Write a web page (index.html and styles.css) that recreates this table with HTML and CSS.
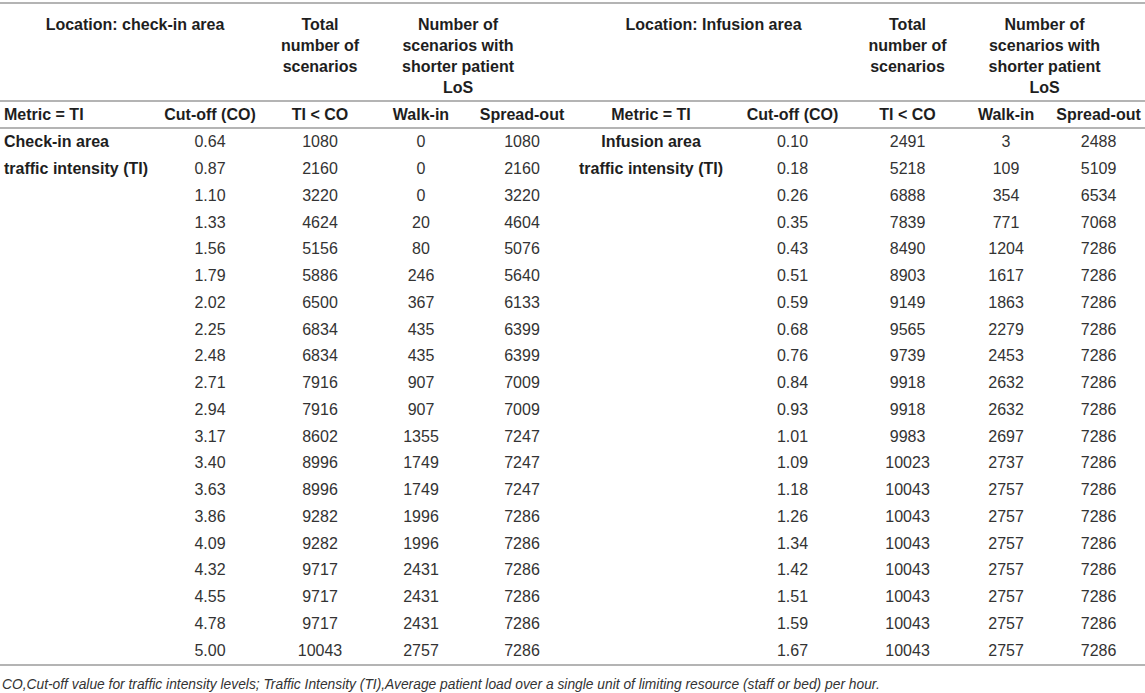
FILE: index.html
```html
<!DOCTYPE html>
<html lang="en">
<head>
  <meta charset="UTF-8" />
  <title>Traffic intensity cut-off scenarios</title>
  <link rel="stylesheet" href="styles.css">
</head>
<body>
  <table class="data-table">
    <colgroup>
      <col class="c-metric"><col class="c-cut"><col class="c-total"><col class="c-walk"><col class="c-spread">
      <col class="c-metric-r"><col class="c-cut-r"><col class="c-total-r"><col class="c-walk-r"><col class="c-spread-r">
    </colgroup>
    <thead>
      <tr class="head-top">
        <th colspan="2">Location: check-in area</th>
        <th>Total<br>number of<br>scenarios</th>
        <th colspan="2" class="los-left">Number of<br>scenarios with<br>shorter patient<br>LoS</th>
        <th colspan="2">Location: Infusion area</th>
        <th>Total<br>number of<br>scenarios</th>
        <th colspan="2" class="los-right">Number of<br>scenarios with<br>shorter patient<br>LoS</th>
      </tr>
      <tr class="head-sub">
        <th class="left">Metric = TI</th>
        <th>Cut-off (CO)</th>
        <th>TI &lt; CO</th>
        <th>Walk-in</th>
        <th>Spread-out</th>
        <th>Metric = TI</th>
        <th>Cut-off (CO)</th>
        <th>TI &lt; CO</th>
        <th>Walk-in</th>
        <th>Spread-out</th>
      </tr>
    </thead>
    <tbody id="rows"></tbody>
  </table>

  <p class="note">CO,Cut-off value for traffic intensity levels; Traffic Intensity (TI),Average patient load over a single unit of limiting resource (staff or bed) per hour.</p>

  <script>
    // [cut-off, TI < CO, walk-in, spread-out] for each area
    const checkIn = [
      ["0.64", 1080, 0, 1080], ["0.87", 2160, 0, 2160], ["1.10", 3220, 0, 3220],
      ["1.33", 4624, 20, 4604], ["1.56", 5156, 80, 5076], ["1.79", 5886, 246, 5640],
      ["2.02", 6500, 367, 6133], ["2.25", 6834, 435, 6399], ["2.48", 6834, 435, 6399],
      ["2.71", 7916, 907, 7009], ["2.94", 7916, 907, 7009], ["3.17", 8602, 1355, 7247],
      ["3.40", 8996, 1749, 7247], ["3.63", 8996, 1749, 7247], ["3.86", 9282, 1996, 7286],
      ["4.09", 9282, 1996, 7286], ["4.32", 9717, 2431, 7286], ["4.55", 9717, 2431, 7286],
      ["4.78", 9717, 2431, 7286], ["5.00", 10043, 2757, 7286]
    ];

    const infusion = [
      ["0.10", 2491, 3, 2488], ["0.18", 5218, 109, 5109], ["0.26", 6888, 354, 6534],
      ["0.35", 7839, 771, 7068], ["0.43", 8490, 1204, 7286], ["0.51", 8903, 1617, 7286],
      ["0.59", 9149, 1863, 7286], ["0.68", 9565, 2279, 7286], ["0.76", 9739, 2453, 7286],
      ["0.84", 9918, 2632, 7286], ["0.93", 9918, 2632, 7286], ["1.01", 9983, 2697, 7286],
      ["1.09", 10023, 2737, 7286], ["1.18", 10043, 2757, 7286], ["1.26", 10043, 2757, 7286],
      ["1.34", 10043, 2757, 7286], ["1.42", 10043, 2757, 7286], ["1.51", 10043, 2757, 7286],
      ["1.59", 10043, 2757, 7286], ["1.67", 10043, 2757, 7286]
    ];

    const labelsLeft = ["Check-in area", "traffic intensity (TI)"];
    const labelsRight = ["Infusion area", "traffic intensity (TI)"];

    const tbody = document.getElementById("rows");
    checkIn.forEach((row, i) => {
      const tr = document.createElement("tr");
      let html = `<td class="label left">${labelsLeft[i] || ""}</td>`;
      row.forEach(v => html += `<td>${v}</td>`);
      html += `<td class="label">${labelsRight[i] || ""}</td>`;
      infusion[i].forEach(v => html += `<td>${v}</td>`);
      tr.innerHTML = html;
      tbody.appendChild(tr);
    });
  </script>
</body>
</html>
```

FILE: styles.css
```css
body {
  margin: 0;
  background: #fff;
  color: #222;
  font-family: "Liberation Sans", Arial, sans-serif;
}

.data-table {
  width: 1145px;
  margin-top: 2px;
  border-collapse: collapse;
  table-layout: fixed;
  font-size: 16px;
  border-top: 2px solid #b4b4b4;
  border-bottom: 2px solid #b4b4b4;
}

.c-metric { width: 150px; }
.c-cut { width: 120px; }
.c-total { width: 100px; }
.c-walk { width: 102px; }
.c-spread { width: 100px; }
.c-metric-r { width: 158px; }
.c-cut-r { width: 125px; }
.c-total-r { width: 105px; }
.c-walk-r { width: 92px; }
.c-spread-r { width: 93px; }

th, td {
  padding: 0;
  text-align: center;
  white-space: nowrap;
}

th {
  font-weight: bold;
  color: #1e1e1e;
}

.head-top th {
  vertical-align: top;
  line-height: 21px;
  padding: 10px 0 2px;
  border-bottom: 2px solid #b4b4b4;
}

.head-top .los-left {
  padding-right: 26px;
}

.head-top .los-right {
  padding-right: 16px;
}

.head-sub th {
  line-height: 25px;
  border-bottom: 2px solid #b4b4b4;
}

td {
  height: 26.75px;
  color: #333;
}

td.label {
  font-weight: bold;
  color: #1e1e1e;
}

.left {
  text-align: left;
  padding-left: 4px;
}

.note {
  margin: 11px 0 0 2px;
  font-size: 13.8px;
  font-style: italic;
  color: #333;
}
```
